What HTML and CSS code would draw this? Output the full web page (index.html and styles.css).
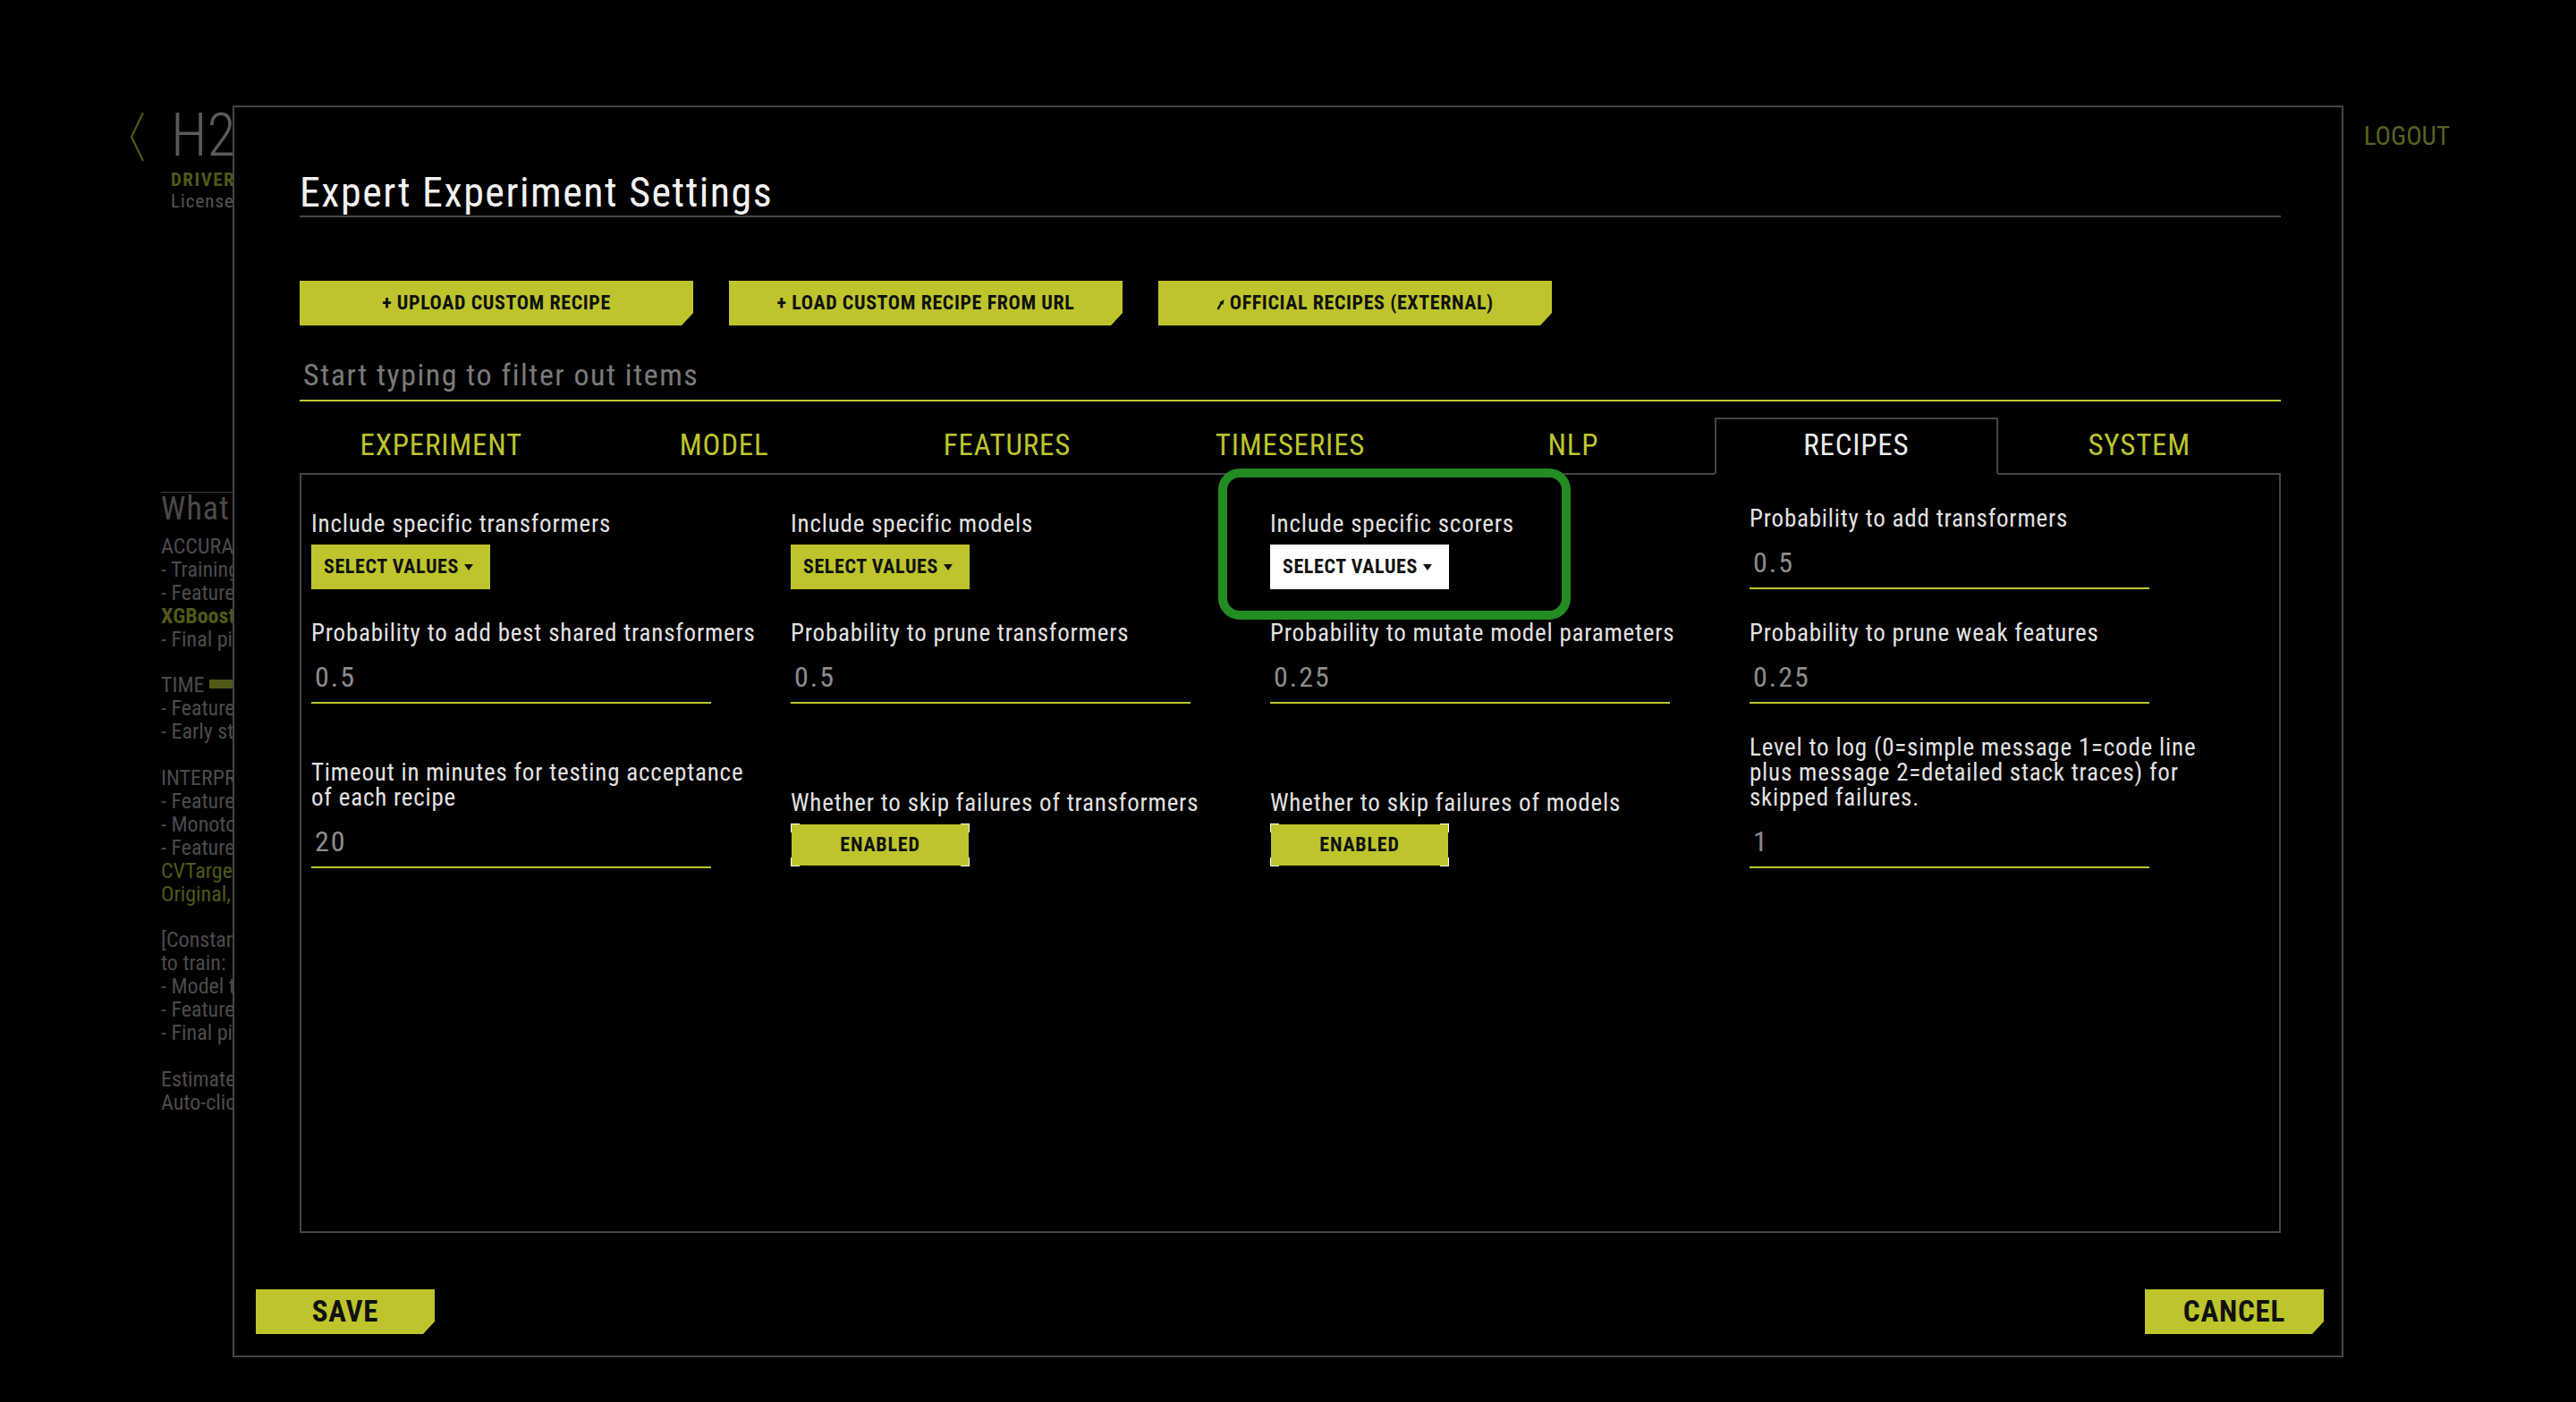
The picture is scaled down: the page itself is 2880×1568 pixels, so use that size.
FILE: index.html
```html
<!DOCTYPE html>
<html lang="en">
<head>
<meta charset="utf-8">
<title>Expert Experiment Settings</title>
<link rel="stylesheet" href="styles.css">
</head>
<body>
<div class="app">
  <header class="topbar">
    <div class="brand">
      <svg class="chev" width="16" height="56" viewBox="0 0 16 56"><polyline points="15,1 2,28 15,55" fill="none" stroke="#4f571a" stroke-width="2.2"/></svg>
      <div class="brand-text">
        <div class="logo">H2O</div>
        <div class="product">DRIVERLESS</div>
        <div class="license">Licensed to</div>
      </div>
    </div>
    <a class="logout">LOGOUT</a>
  </header>
  <aside class="side">
    <h3>What do</h3>
    <div class="lines">
      <div>ACCURACY:</div>
      <div>- Training data</div>
      <div>- Features:</div>
      <div class="hl b">XGBoostGBM</div>
      <div>- Final pipeline</div>
      <div>&nbsp;</div>
      <div>TIME <span class="bar"></span></div>
      <div>- Features:</div>
      <div>- Early stopping</div>
      <div>&nbsp;</div>
      <div>INTERPRET</div>
      <div>- Features:</div>
      <div>- Monotonic</div>
      <div>- Feature eng.</div>
      <div class="hl">CVTargetEnc</div>
      <div class="hl">Original,</div>
      <div>&nbsp;</div>
      <div>[Constant,</div>
      <div>to train:</div>
      <div>- Model tuning</div>
      <div>- Features:</div>
      <div>- Final pipeline</div>
      <div>&nbsp;</div>
      <div>Estimated</div>
      <div>Auto-click</div>
    </div>
  </aside>
</div>

<div class="modal" role="dialog">
  <div class="modal-body">
    <h1 class="title">Expert Experiment Settings</h1>
    <div class="actions">
      <button class="cut-btn">+ UPLOAD CUSTOM RECIPE</button>
      <button class="cut-btn">+ LOAD CUSTOM RECIPE FROM URL</button>
      <button class="cut-btn"><svg class="ext" width="9" height="13" viewBox="0 0 9 13"><path d="M1.5 12 L5.5 5" stroke="#111" stroke-width="2.4" fill="none"/><path d="M3.2 4.2 L8.5 1 L7.6 7 Z" fill="#111"/></svg> OFFICIAL RECIPES (EXTERNAL)</button>
    </div>
    <input class="filter" type="text" placeholder="Start typing to filter out items">
    <nav class="tabs">
      <div class="tab">EXPERIMENT</div>
      <div class="tab">MODEL</div>
      <div class="tab">FEATURES</div>
      <div class="tab">TIMESERIES</div>
      <div class="tab">NLP</div>
      <div class="tab active">RECIPES</div>
      <div class="tab">SYSTEM</div>
    </nav>
    <section class="panel">
      <div class="grid">
        <div class="field">
          <div class="label">Include specific transformers</div>
          <button class="select">SELECT VALUES <svg class="caret" width="10" height="7" viewBox="0 0 10 7"><path d="M0 0 H10 L5 7 Z" fill="#111"/></svg></button>
        </div>
        <div class="field">
          <div class="label">Include specific models</div>
          <button class="select">SELECT VALUES <svg class="caret" width="10" height="7" viewBox="0 0 10 7"><path d="M0 0 H10 L5 7 Z" fill="#111"/></svg></button>
        </div>
        <div class="field">
          <div class="label">Include specific scorers</div>
          <button class="select white">SELECT VALUES <svg class="caret" width="10" height="7" viewBox="0 0 10 7"><path d="M0 0 H10 L5 7 Z" fill="#111"/></svg></button>
        </div>
        <div class="field">
          <div class="label">Probability to add transformers</div>
          <div class="value">0.5</div>
        </div>

        <div class="field">
          <div class="label">Probability to add best shared transformers</div>
          <div class="value">0.5</div>
        </div>
        <div class="field">
          <div class="label">Probability to prune transformers</div>
          <div class="value">0.5</div>
        </div>
        <div class="field">
          <div class="label">Probability to mutate model parameters</div>
          <div class="value">0.25</div>
        </div>
        <div class="field">
          <div class="label">Probability to prune weak features</div>
          <div class="value">0.25</div>
        </div>

        <div class="field">
          <div class="label">Timeout in minutes for testing acceptance of each recipe</div>
          <div class="value">20</div>
        </div>
        <div class="field">
          <div class="label">Whether to skip failures of transformers</div>
          <button class="toggle">ENABLED</button>
        </div>
        <div class="field">
          <div class="label">Whether to skip failures of models</div>
          <button class="toggle">ENABLED</button>
        </div>
        <div class="field">
          <div class="label">Level to log (0=simple message 1=code line plus message 2=detailed stack traces) for skipped failures.</div>
          <div class="value">1</div>
        </div>
      </div>
      <div class="highlight"></div>
    </section>
  </div>
  <footer class="modal-footer">
    <button class="cut-btn big">SAVE</button>
    <button class="cut-btn big">CANCEL</button>
  </footer>
</div>
</body>
</html>
```

FILE: styles.css
```css
:root {
  --cond: "Liberation Sans Narrow", "Roboto Condensed", "Arial Narrow", Roboto, sans-serif;
  --yellow: #bec52c;
  --line: #454545;
  --olive: #515818;
}

html, body {
  margin: 0;
  padding: 0;
  background: #000;
}

body {
  width: 2880px;
  height: 1568px;
  overflow: hidden;
  position: relative;
  font-family: var(--cond);
}

/* ---------- background page (mostly covered by the dialog) ---------- */
.app {
  display: flex;
  flex-direction: column;
}

.topbar {
  display: flex;
  justify-content: space-between;
  align-items: flex-start;
  height: 112px;
  padding: 125px 141px 0 145px;
}

.brand {
  display: flex;
  align-items: flex-start;
}

.chev {
  margin-right: 30px;
}

.brand-text {
  white-space: nowrap;
}

.logo {
  font-weight: 300;
  font-size: 66px;
  line-height: 60px;
  margin-top: -3px;
  color: #5a5a5a;
}

.product {
  margin-top: 7px;
  font-weight: 700;
  font-size: 21px;
  line-height: 24px;
  letter-spacing: 1.5px;
  color: var(--olive);
}

.license {
  font-size: 21px;
  line-height: 24px;
  letter-spacing: 1px;
  color: #555;
}

.logout {
  margin-top: 10px;
  font-size: 29px;
  line-height: 34px;
  color: #5a6221;
}

.side {
  margin: 313px 0 0 180px;
  width: 80px;
  border-top: 1px solid #3a3a3a;
  color: #4b4b4b;
}

.side h3 {
  margin: 0;
  font-size: 36px;
  line-height: 36px;
  font-weight: 400;
  letter-spacing: 1px;
  white-space: nowrap;
}

.side .lines {
  margin-top: 12px;
  font-size: 24px;
  line-height: 25.9px;
  white-space: nowrap;
}

.side .hl {
  color: var(--olive);
}

.side .b {
  font-weight: 700;
}

.side .bar {
  display: inline-block;
  width: 70px;
  height: 10px;
  background: var(--olive);
  vertical-align: 4px;
}

/* ---------- modal ---------- */
.modal {
  position: absolute;
  left: 260px;
  top: 118px;
  width: 2360px;
  height: 1400px;
  box-sizing: border-box;
  border: 2px solid var(--line);
  background: #000;
  padding: 69px 20px 24px 24px;
  display: flex;
  flex-direction: column;
}

.modal-body {
  padding: 0 48px 0 49px;
}

.title {
  margin: 0;
  font-size: 46px;
  line-height: 52px;
  font-weight: 400;
  letter-spacing: 1.5px;
  color: #f2f2f2;
  border-bottom: 2px solid var(--line);
}

.actions {
  display: flex;
  gap: 40px;
  margin-top: 71px;
}

.cut-btn {
  height: 50px;
  padding: 0;
  border: 0;
  background: var(--yellow);
  color: #111;
  font-family: var(--cond);
  font-weight: 700;
  font-size: 22px;
  line-height: 50px;
  letter-spacing: 0.6px;
  text-align: center;
  clip-path: polygon(0 0, 100% 0, 100% calc(100% - 14px), calc(100% - 13px) 100%, 0 100%);
  cursor: pointer;
}

.actions .cut-btn {
  width: 440px;
}

.ext {
  vertical-align: -1px;
}

.filter {
  display: block;
  width: 100%;
  box-sizing: border-box;
  margin: 35px 0 0;
  height: 50px;
  padding: 0 0 8px 4px;
  border: 0;
  border-bottom: 2px solid var(--yellow);
  background: transparent;
  font-family: var(--cond);
  font-size: 34px;
  line-height: 40px;
  letter-spacing: 1.5px;
  color: #ddd;
  outline: none;
}

.filter::placeholder {
  color: #7a7a7a;
}

.tabs {
  display: flex;
  margin-top: 18px;
  border-bottom: 2px solid var(--line);
}

.tab {
  flex: 1;
  height: 64px;
  box-sizing: border-box;
  margin-bottom: -2px;
  border: 2px solid transparent;
  text-align: center;
  font-size: 33px;
  line-height: 58px;
  letter-spacing: 0.8px;
  color: var(--yellow);
}

.tab.active {
  border-color: var(--line) var(--line) #000;
  color: #ececec;
}

.panel {
  position: relative;
  height: 848px;
  box-sizing: border-box;
  border: 2px solid var(--line);
  border-top: 0;
  padding: 35px 0 0 11px;
}

.grid {
  display: grid;
  grid-template-columns: repeat(4, 512px);
  column-gap: 24px;
  row-gap: 35px;
  align-items: end;
}

.label {
  max-width: 505px;
  margin-bottom: 9px;
  font-size: 27px;
  line-height: 28px;
  letter-spacing: 0.8px;
  color: #e2e2e2;
}

.value {
  width: 447px;
  box-sizing: border-box;
  padding: 8px 0 10px 4px;
  font-size: 32px;
  line-height: 36px;
  letter-spacing: 2px;
  color: #8c8c8c;
  border-bottom: 2px solid var(--yellow);
}

.select {
  display: block;
  width: 200px;
  height: 50px;
  padding: 0 0 0 14px;
  border: 0;
  background: var(--yellow);
  color: #111;
  text-align: left;
  font-family: var(--cond);
  font-weight: 700;
  font-size: 22px;
  line-height: 50px;
  letter-spacing: 0.6px;
  white-space: nowrap;
}

.select.white {
  background: #fff;
}

.caret {
  vertical-align: 3px;
  margin-left: 0;
}

.toggle {
  display: block;
  width: 200px;
  height: 48px;
  margin-bottom: 2px;
  padding: 0;
  border: 1px solid transparent;
  color: #111;
  font-family: var(--cond);
  font-weight: 700;
  font-size: 22px;
  line-height: 46px;
  letter-spacing: 0.8px;
  text-align: center;
  background:
    linear-gradient(#fff, #fff) left top / 10px 1px no-repeat border-box,
    linear-gradient(#fff, #fff) left top / 1px 10px no-repeat border-box,
    linear-gradient(#fff, #fff) right top / 10px 1px no-repeat border-box,
    linear-gradient(#fff, #fff) right top / 1px 10px no-repeat border-box,
    linear-gradient(#fff, #fff) left bottom / 10px 1px no-repeat border-box,
    linear-gradient(#fff, #fff) left bottom / 1px 10px no-repeat border-box,
    linear-gradient(#fff, #fff) right bottom / 10px 1px no-repeat border-box,
    linear-gradient(#fff, #fff) right bottom / 1px 10px no-repeat border-box,
    linear-gradient(var(--yellow), var(--yellow)) padding-box;
}

.highlight {
  position: absolute;
  left: 1025px;
  top: -7px;
  width: 394px;
  height: 169px;
  box-sizing: border-box;
  border: 10px solid #238c23;
  border-radius: 24px;
  pointer-events: none;
}

.modal-footer {
  display: flex;
  justify-content: space-between;
  margin-top: auto;
}

.cut-btn.big {
  width: 200px;
  font-size: 33px;
  letter-spacing: 0.8px;
}
```
